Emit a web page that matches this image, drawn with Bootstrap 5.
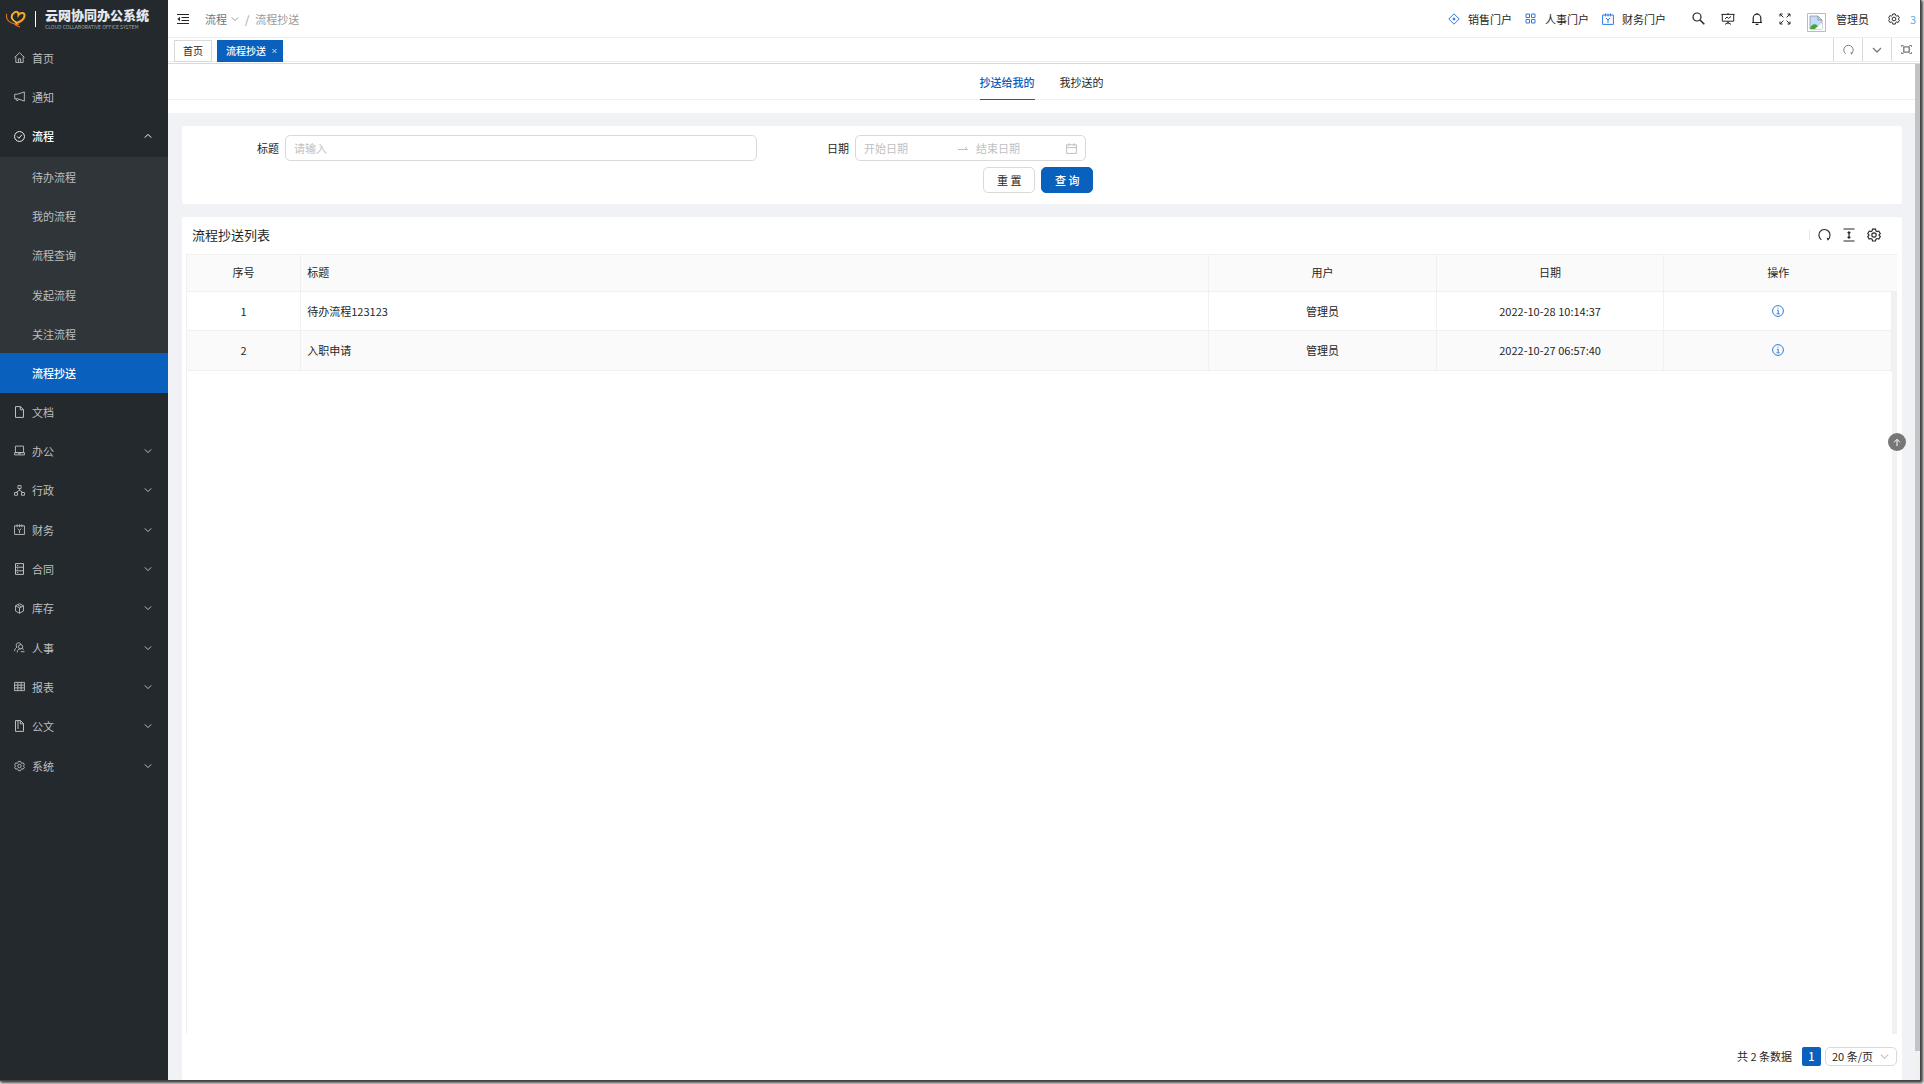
<!DOCTYPE html>
<html lang="zh-CN">
<head>
<meta charset="utf-8">
<meta name="viewport" content="width=device-width, initial-scale=1">
<title>云网协同办公系统</title>
<link href="https://cdn.jsdelivr.net/npm/bootstrap@5.3.0/dist/css/bootstrap.min.css" rel="stylesheet">
<style>
:root{--brand:#0960bd;--line:#d9d9d9;--soft:#f0f0f0;--ink:#262626}
body{font-family:"Noto Sans CJK SC","Noto Sans",sans-serif;font-size:11px;line-height:20px;color:var(--ink);background:#fff}
a{color:inherit;text-decoration:none}
svg{display:block;flex:none;fill:none;stroke:currentColor;stroke-width:1}
button{font:inherit;color:inherit}
.window-frame{height:100vh;padding:0 3px 3px 0;background:#fff}
.window-body{border-right:1px solid #444;border-bottom:1px solid #444;box-shadow:1px 1px 3px 1px rgba(0,0,0,.8);position:relative}
.side{width:168px;background:#24292d;color:#bdbfc0}
.brand-bar{height:38px;padding:0 6px;gap:9px}
.brand-rule{width:1px;height:16px;background:#fff}
.brand-name{font-size:13px;line-height:16px;font-weight:900;color:#e4e8ee}
.brand-sub{font-size:5px;line-height:8px;color:#a3a7aa}
.menu{padding-top:1px}
.menu li>a{height:39px;padding:0 16px 2px 14px;gap:7px}
.menu li:nth-child(3n)>a{height:40px}
.menu .open-item{color:#fff;font-weight:500}
.submenu{background:#303539}
.submenu li>a{padding:0 0 0 32px}
.submenu .current{background:var(--brand);color:#fff;font-weight:500}
.top-bar{height:38px;border-bottom:1px solid #eee;padding-left:9px}
.crumb{color:#999;--bs-breadcrumb-divider-color:#999;--bs-breadcrumb-item-padding-x:6px;font-size:11px}
.portals{gap:13px;margin-right:26px}
.portal{gap:8px}
.portal svg{color:#2a7bea}
.info-link{color:#2f7dd1}
.user-box{gap:10px}
.gear-btn{margin:0 10px 0 19px}
.more-cut{color:#62aee6;padding-right:4px}
.tag-bar{height:26px;border-bottom:1px solid var(--line)}
.tag-inner{border-bottom:1px solid #eee;height:24px}
.tag-list{gap:5px;margin:0 0 -1px 6px}
.page-tag{height:22px;border:1px solid var(--line);padding:0 8px;font-size:10px;background:#fff}
.page-tag.current{background:var(--brand);border-color:var(--brand);color:#fff;font-weight:500;padding:0 5px 0 8px;gap:6px}
.page-tag svg{opacity:.8}
.tag-tool{width:29px;height:23px;border:0;border-left:1px solid var(--line);background:none;color:#777}
.plain-btn{border:0;background:none;padding:0}
.scroller{background:#f0f2f5}
.page-scroll{width:5px;background:#f1f1f1}
.page-thumb{height:987px;background:#c1c3c5}
.view-tabs{background:#fff;padding-bottom:13px}
.view-tabs .nav{height:36px;border-bottom:1px solid var(--soft);gap:25px}
.view-tabs .nav-link{padding:8px 0 0;height:36px;color:var(--ink);border-radius:0}
.view-tabs .nav-link.active{color:var(--brand);font-weight:500;border-bottom:1px solid var(--brand)}
.panel{background:#fff;border-radius:2px;margin:13px 13px 0 14px}
.search-panel{height:78px;padding:9px 5px 0}
.form-cap{width:98px;padding-right:6px;text-align:right;flex:none}
.field{height:26px;min-height:26px;border:1px solid var(--line);border-radius:5px;font-size:11px;line-height:20px;padding:2px 8px;background:#fff}
.field::placeholder,.range-box input::placeholder{color:#bfbfbf;opacity:1}
.range-box{width:231px;color:#bfbfbf}
.range-box input{border:0;padding:0;width:94px;min-width:0;outline:0;font-size:11px;line-height:20px}
.range-box input+svg+input{width:82px}
.act-row{width:53%;gap:6px;padding-top:6px}
.act{width:52px;height:26px;border-radius:5px;border:1px solid var(--line);font-size:11px;padding:0;line-height:24px;background:#fff}
.act.main{background:var(--brand);border-color:var(--brand);color:#fff;font-weight:500}
.list-head{height:37px;padding:0 21px 2px 10px}
.list-tools{gap:12px}
.list-title{font-size:13px;line-height:20px;font-weight:400}
.tool-rule{width:1px;height:10px;background:#e6e6e6}
.grid-wrap{margin:0 5px 0 4px}
.grid-side{border-left:1px solid var(--soft);min-width:0}
.grid-table{table-layout:fixed;font-size:11px;margin:0;--bs-table-color:#262626;border-collapse:separate;border-spacing:0}
.grid-table th,.grid-table td{font-weight:400;text-align:center;vertical-align:middle;padding:0 6px 1px;border-width:0 1px 1px 0;border-style:solid;border-color:var(--soft);height:39px}
.grid-table th{background:#fafafa;border-top-width:1px;height:38px;padding-bottom:2px}
.grid-table th:last-child{border-right:0}
.grid-table .t-left{text-align:left}
.grid-table tbody tr:nth-child(2) td{background:#fafafa;height:40px;padding-bottom:2px}
.gutter{width:5px}
.gutter-head{height:38px;background:#fafafa;border-top:1px solid var(--soft);border-bottom:1px solid var(--soft)}
.gutter-track{background:#f1f1f1}
.pager{height:46px;padding:0 5px 2px 0;gap:4px}
.pager-total{margin-right:6px}
.page-now{width:19px;height:19px;border-radius:2px;background:var(--brand);color:#fff;line-height:19px;font-weight:500}
.size-wrap{position:relative}
.size-select{display:block;appearance:none;width:72px;height:19px;border:1px solid var(--line);border-radius:5px;background:#fff;font-size:11px;line-height:17px;padding:0 6px;color:var(--ink)}
.size-wrap svg{position:absolute;right:8px;top:5px;color:#bfbfbf;pointer-events:none}
.to-top{position:absolute;right:14px;top:433px;width:18px;height:18px;border-radius:50%;background:#777;color:#fff;z-index:3}
</style>
<script src="https://cdn.jsdelivr.net/npm/bootstrap@5.3.0/dist/js/bootstrap.bundle.min.js"></script>
</head>
<body>
<svg width="0" height="0" class="position-absolute" aria-hidden="true">
<symbol id="down" viewBox="0 0 8 8"><path d="M.8 2.400 4 5.600 7.200 2.400"/></symbol>
<symbol id="up" viewBox="0 0 8 8"><path d="M.8 5.600 4 2.400l3.200 3.200"/></symbol>
<symbol id="gear" viewBox="0 0 16 16"><path stroke-width="1.300" d="M6.300 1.300h3.400l.5 2 1.300.8 2-.6 1.700 2.900-1.500 1.500v.3l1.500 1.500-1.700 2.900-2-.6-1.300.8-.5 2H6.300l-.5-2-1.300-.8-2 .6L.8 9.700l1.500-1.500v-.3L.8 6.400l1.700-2.900 2 .6 1.300-.8z"/><circle cx="8" cy="8" r="2.500" stroke-width="1.300"/></symbol>
<symbol id="money" viewBox="0 0 12 12"><path d="M.6 2h10.800v9.400H.6zM3.400.4v3M6 .4v3M8.600.4v3M4.200 5 6 7.200 7.800 5M6 7.200V10"/></symbol>
<symbol id="reload" viewBox="0 0 14 14"><path stroke-width="1.200" d="M3.600 12.600A6 6 0 1 1 10.600 12.400"/><path fill="currentColor" stroke="none" d="m9.400 10.600 3 .6-1.900 2.600z"/></symbol>
<symbol id="info" viewBox="0 0 12 12"><circle cx="6" cy="6" r="5.400"/><path d="M5 5.300h1.200v3.400M4.600 8.800h3M5.500 3.200h1"/></symbol>
</svg>
<div class="window-frame">
<div class="window-body d-flex h-100">
<aside class="side d-flex flex-column flex-shrink-0">
<div class="brand-bar d-flex align-items-center">
<svg width="20" height="18" viewBox="0 0 20 18"><path stroke="#f5a623" stroke-width="2" d="M7 4C9 .5 12.500 1 12.500 5c2-3 6.500-2.500 6 1C18 10 14 12 9.500 13.500"/><path stroke="#e8742a" stroke-width="1.100" d="M.8 4c-2 6 4 10 12 10.500M14 17c-3-.5-5-2-6-3.500"/><path stroke="#f6c32c" stroke-width="1.700" d="M7 3.500c-3 4-1 6.500 4 9.500"/></svg>
<div class="brand-rule"></div>
<div><div class="brand-name">云网协同办公系统</div><div class="brand-sub text-nowrap">CLOUD COLLABORATIVE OFFICE SYSTEM</div></div>
</div>
<ul class="menu list-unstyled m-0" id="menu">
<li><a href="#" class="d-flex align-items-center"><svg width="11" height="11" viewBox="0 0 12 12"><path d="M.5 6 6 .8 11.500 6M2 5v6.400h8V5M4.800 11.200V7.500h2.400v3.700"/></svg>首页</a></li>
<li><a href="#" class="d-flex align-items-center"><svg width="11" height="11" viewBox="0 0 12 12"><path d="M11.300 1v10L4 8.500H.8v-5H4zM2 8.500l1.300 2.300 2-1.600"/></svg>通知</a></li>
<li><a href="#" class="open-item d-flex align-items-center"><svg width="11" height="11" viewBox="0 0 12 12" stroke-width="1.200"><circle cx="6" cy="6" r="5.400"/><path d="m3.500 6 1.900 1.900 3.200-3.800"/></svg>流程<svg class="ms-auto" width="8" height="8"><use href="#up"/></svg></a>
<ul class="submenu list-unstyled m-0">
<li><a href="#" class="d-flex align-items-center">待办流程</a></li>
<li><a href="#" class="d-flex align-items-center">我的流程</a></li>
<li><a href="#" class="d-flex align-items-center">流程查询</a></li>
<li><a href="#" class="d-flex align-items-center">发起流程</a></li>
<li><a href="#" class="d-flex align-items-center">关注流程</a></li>
<li><a href="#" class="current d-flex align-items-center">流程抄送</a></li>
</ul></li>
<li><a href="#" class="d-flex align-items-center"><svg width="11" height="12" viewBox="0 0 11 12"><path d="M1.500.6h5L9.500 3.600v7.800h-8zM6.300.6v3.200h3.200"/></svg>文档</a></li>
<li><a href="#" class="d-flex align-items-center"><svg width="11" height="11" viewBox="0 0 12 12"><path d="M1.600 1.200h8.800v7H1.600zM.6 8.400h10.800v2.400H.6zM4.500 9.600h3"/></svg>办公<svg class="ms-auto" width="8" height="8"><use href="#down"/></svg></a></li>
<li><a href="#" class="d-flex align-items-center"><svg width="11" height="11" viewBox="0 0 12 12"><path d="M4.300.6h3.400v3.200H4.300zM.6 8.200h3.200v3H.6zM8.200 8.200h3.200v3H8.200zM6 3.800V6M2.200 8.200 6 5.500l3.800 2.700"/></svg>行政<svg class="ms-auto" width="8" height="8"><use href="#down"/></svg></a></li>
<li><a href="#" class="d-flex align-items-center"><svg width="11" height="11"><use href="#money"/></svg>财务<svg class="ms-auto" width="8" height="8"><use href="#down"/></svg></a></li>
<li><a href="#" class="d-flex align-items-center"><svg width="11" height="12" viewBox="0 0 11 12"><path d="M1.500.6h8v10.800h-8zM1.500 4.200h8M1.500 7.800h8M3 2.400h1.200M3 6h1.200M3 9.600h1.200"/></svg>合同<svg class="ms-auto" width="8" height="8"><use href="#down"/></svg></a></li>
<li><a href="#" class="d-flex align-items-center"><svg width="11" height="11" viewBox="0 0 12 12"><path d="M6 .8 10.300 3v5.800L6 11.200 1.700 8.800V3zM1.700 3 6 5.400 10.300 3M6 5.400v5.800M3.800 1.900 8 4.200"/></svg>库存<svg class="ms-auto" width="8" height="8"><use href="#down"/></svg></a></li>
<li><a href="#" class="d-flex align-items-center"><svg width="11" height="11" viewBox="0 0 12 12"><path d="M3 5.500C1.500 3 3 .8 5 .8s2.600 1.400 2.400 2.400M3.500 5.400C1.500 6.500.8 8 .6 10"/><circle cx="7.200" cy="5.200" r="2.300"/><path d="M3.400 11.400C3.600 8.500 5 7.500 7.200 7.500M7.500 10.600h4M8.800 7.200l1.800 1"/></svg>人事<svg class="ms-auto" width="8" height="8"><use href="#down"/></svg></a></li>
<li><a href="#" class="d-flex align-items-center"><svg width="11" height="11" viewBox="0 0 12 12"><path d="M.6 1.500h10.800v9H.6zM.6 4.500h10.800M.6 7.500h10.800M4.200 1.500v9M7.800 1.500v9"/></svg>报表<svg class="ms-auto" width="8" height="8"><use href="#down"/></svg></a></li>
<li><a href="#" class="d-flex align-items-center"><svg width="11" height="12" viewBox="0 0 11 12"><path d="M1.500.6h5L9.500 3.600v7.800h-8zM6.300.6v3.200h3.200M4 1v8"/></svg>公文<svg class="ms-auto" width="8" height="8"><use href="#down"/></svg></a></li>
<li><a href="#" class="d-flex align-items-center"><svg width="11" height="12"><use href="#gear"/></svg>系统<svg class="ms-auto" width="8" height="8"><use href="#down"/></svg></a></li>
</ul>
</aside>
<div class="d-flex flex-column flex-grow-1 overflow-hidden">
<header class="top-bar d-flex align-items-center flex-shrink-0">
<button class="plain-btn" aria-label="折叠菜单"><svg width="12" height="12" viewBox="0 0 12 12"><path d="M0 1.500h12M4.500 4.500H12M4.500 7.500H12M0 10.500h12"/><path fill="currentColor" stroke="none" d="M3 3.800v4.400L.4 6z"/></svg></button>
<nav class="ms-3" aria-label="breadcrumb"><ol class="breadcrumb crumb m-0">
<li class="breadcrumb-item d-flex align-items-center gap-1"><a href="#" class="text-secondary">流程</a><svg width="8" height="8"><use href="#down"/></svg></li>
<li class="breadcrumb-item">流程抄送</li></ol></nav>
<div class="ms-auto d-flex align-items-center">
<div class="portals d-flex">
<a href="#" class="portal d-flex align-items-center"><svg width="12" height="12" viewBox="0 0 12 12" stroke-width="1.200"><path d="M6 .8 11.200 6 6 11.200.8 6z"/><circle cx="6" cy="6" r="1" fill="currentColor"/></svg>销售门户</a>
<a href="#" class="portal d-flex align-items-center"><svg width="12" height="11" viewBox="0 0 12 11" stroke-width="1.200"><path d="M1 1h3.500v3.500H1zM6.500 1H10v3.500H6.500zM1 6.500h3.500V10H1zM6.500 6.500H10V10H6.500z"/></svg>人事门户</a>
<a href="#" class="portal d-flex align-items-center"><svg width="12" height="12"><use href="#money"/></svg>财务门户</a>
</div>
<div class="d-flex align-items-center gap-3">
<button class="plain-btn" aria-label="搜索"><svg width="13" height="13" viewBox="0 0 13 13"><circle cx="5" cy="5" r="4" stroke-width="1.200"/><path d="m8 8 4.300 4.300" stroke-width="1.500"/></svg></button>
<button class="plain-btn" aria-label="看板"><svg width="14" height="12" viewBox="0 0 14 12" stroke-width="1.200"><path d="M.4 1.400h13.200M1.300 1.400v6.800h11.400V1.400M7 8.200v3M4 11.400l3-1.900 3 1.900M4 6l2-2 1.600 1.400L10 3.400M7 0v1.400"/></svg></button>
<button class="plain-btn" aria-label="消息"><svg width="12" height="13" viewBox="0 0 12 13"><path stroke-width="1.200" d="M1 10.500h10M2.200 10.500V6a3.800 3.800 0 0 1 7.600 0v4.500M6 1v1.400M4.600 12.300h2.800"/></svg></button>
<button class="plain-btn" aria-label="全屏"><svg width="12" height="12" viewBox="0 0 12 12" stroke-width="1.200"><path d="M1 3.500V1h2.500M8.500 1H11v2.500M11 8.500V11H8.500M3.500 11H1V8.500M1 1l3.400 3.400M11 1 7.600 4.400M11 11 7.600 7.600M1 11l3.400-3.400"/></svg></button>
<div class="user-box d-flex align-items-center"><svg class="mt-2" width="19" height="19" viewBox="0 0 19 19" role="img" aria-label="头像"><path fill="#fff" stroke="#bbb" d="M.5.5h18v18H.5z"/><path d="M3 3h8l4 4v9H3z" fill="#c5dcf6" stroke="#8d98a8" stroke-width=".8"/><path d="M3 16c1-5 5-6 8-3l-3 3z" fill="#46a53a" stroke="none"/><path d="m8 16 7-6v6z" fill="#fff" stroke="none"/><path d="M11 3v4h4" stroke="#8d98a8"/></svg><a href="#">管理员</a></div>
</div>
<button class="gear-btn plain-btn" aria-label="设置"><svg width="12" height="12"><use href="#gear"/></svg></button>
<a href="#" class="more-cut">3</a>
</div>
</header>
<div class="tag-bar flex-shrink-0"><div class="tag-inner d-flex align-items-end">
<div class="tag-list d-flex">
<a href="#" class="page-tag d-flex align-items-center">首页</a>
<a href="#" class="page-tag current d-flex align-items-center">流程抄送<svg width="5" height="6" viewBox="0 0 5 6"><path d="m.5 1 4 4m0-4-4 4"/></svg></a>
</div>
<div class="ms-auto d-flex">
<button class="tag-tool d-flex align-items-center justify-content-center" aria-label="刷新"><svg width="11" height="11"><use href="#reload"/></svg></button>
<button class="tag-tool d-flex align-items-center justify-content-center" aria-label="更多"><svg width="10" height="10"><use href="#down"/></svg></button>
<button class="tag-tool d-flex align-items-center justify-content-center" aria-label="最大化"><svg width="11" height="11" viewBox="0 0 11 11"><path stroke-width="1.300" d="M2.800 2.800h5.400v5.400H2.800z"/><path d="M.5 2.800V1.500h2M8.500 1.500h2v1.300M10.500 8.200v1.300h-2M2.500 9.500h-2V8.200"/></svg></button>
</div></div></div>
<div class="scroller d-flex flex-grow-1 overflow-hidden">
<main class="flex-grow-1 d-flex flex-column">
<div class="view-tabs"><ul class="nav justify-content-center">
<li class="nav-item"><a href="#" class="nav-link active">抄送给我的</a></li>
<li class="nav-item"><a href="#" class="nav-link">我抄送的</a></li></ul></div>
<form class="panel search-panel">
<div class="row g-0">
<div class="col-4 d-flex align-items-center"><label for="t" class="form-cap">标题</label><input id="t" class="field form-control" placeholder="请输入"></div>
<div class="col-4 d-flex align-items-center"><label for="d1" class="form-cap">日期</label>
<div class="field range-box d-flex align-items-center"><input id="d1" placeholder="开始日期"><svg class="me-2" width="10" height="6" viewBox="0 0 10 6"><path d="M0 4.500h9.500L7 2"/></svg><input id="d2" aria-label="结束日期" placeholder="结束日期"><svg class="ms-auto" width="11" height="11" viewBox="0 0 11 11"><path d="M.6 1.800h9.800v8.600H.6zM.6 4.600h9.800M3 .3v2.500M8 .3v2.500"/></svg></div></div>
</div>
<div class="act-row d-flex justify-content-end"><button type="reset" class="act">重 置</button><button type="button" class="act main">查 询</button></div>
</form>
<section class="panel d-flex flex-column flex-grow-1">
<div class="list-head d-flex align-items-center"><h1 class="list-title m-0">流程抄送列表</h1>
<div class="list-tools ms-auto d-flex align-items-center">
<div class="d-flex align-items-center gap-2"><div class="tool-rule"></div>
<button class="plain-btn" aria-label="刷新"><svg width="13" height="13"><use href="#reload"/></svg></button></div>
<button class="plain-btn" aria-label="密度"><svg width="12" height="14" viewBox="0 0 12 14"><path stroke-width="1.200" d="M.5 1h11M.5 13h11M6 4v6M4.600 5.200 6 3.800l1.400 1.400M4.600 8.800 6 10.200l1.400-1.400"/></svg></button>
<button class="plain-btn" aria-label="列设置"><svg width="14" height="14"><use href="#gear"/></svg></button>
</div></div>
<div class="grid-wrap d-flex flex-grow-1">
<div class="grid-side flex-grow-1"><table class="table grid-table">
<colgroup><col style="width:6.700%"><col><col style="width:13.350%"><col style="width:13.350%"><col style="width:13.350%"></colgroup>
<thead><tr><th>序号</th><th class="t-left">标题</th><th>用户</th><th>日期</th><th>操作</th></tr></thead>
<tbody>
<tr><td>1</td><td class="t-left">待办流程123123</td><td>管理员</td><td>2022-10-28 10:14:37</td><td><a href="#" class="info-link d-flex justify-content-center" aria-label="详情"><svg width="12" height="12"><use href="#info"/></svg></a></td></tr>
<tr><td>2</td><td class="t-left">入职申请</td><td>管理员</td><td>2022-10-27 06:57:40</td><td><a href="#" class="info-link d-flex justify-content-center" aria-label="详情"><svg width="12" height="12"><use href="#info"/></svg></a></td></tr>
</tbody></table></div>
<div class="gutter flex-shrink-0 d-flex flex-column"><div class="gutter-head"></div><div class="gutter-track flex-grow-1"></div></div>
</div>
<div class="pager d-flex align-items-center justify-content-end">
<span class="pager-total">共 2 条数据</span><a href="#" class="page-now text-center">1</a>
<div class="size-wrap"><select class="size-select" aria-label="每页条数"><option>20 条/页</option></select><svg width="9" height="9"><use href="#down"/></svg></div>
</div>
</section>
</main>
<div class="page-scroll flex-shrink-0"><div class="page-thumb"></div></div>
</div>
</div>
<button class="to-top plain-btn d-flex align-items-center justify-content-center" aria-label="回到顶部"><svg width="8" height="8" viewBox="0 0 8 8" stroke-width="1.600"><path d="M4 8V1.500M1 4.300l3-3 3 3"/></svg></button>
</div>
</div>
</body>
</html>
